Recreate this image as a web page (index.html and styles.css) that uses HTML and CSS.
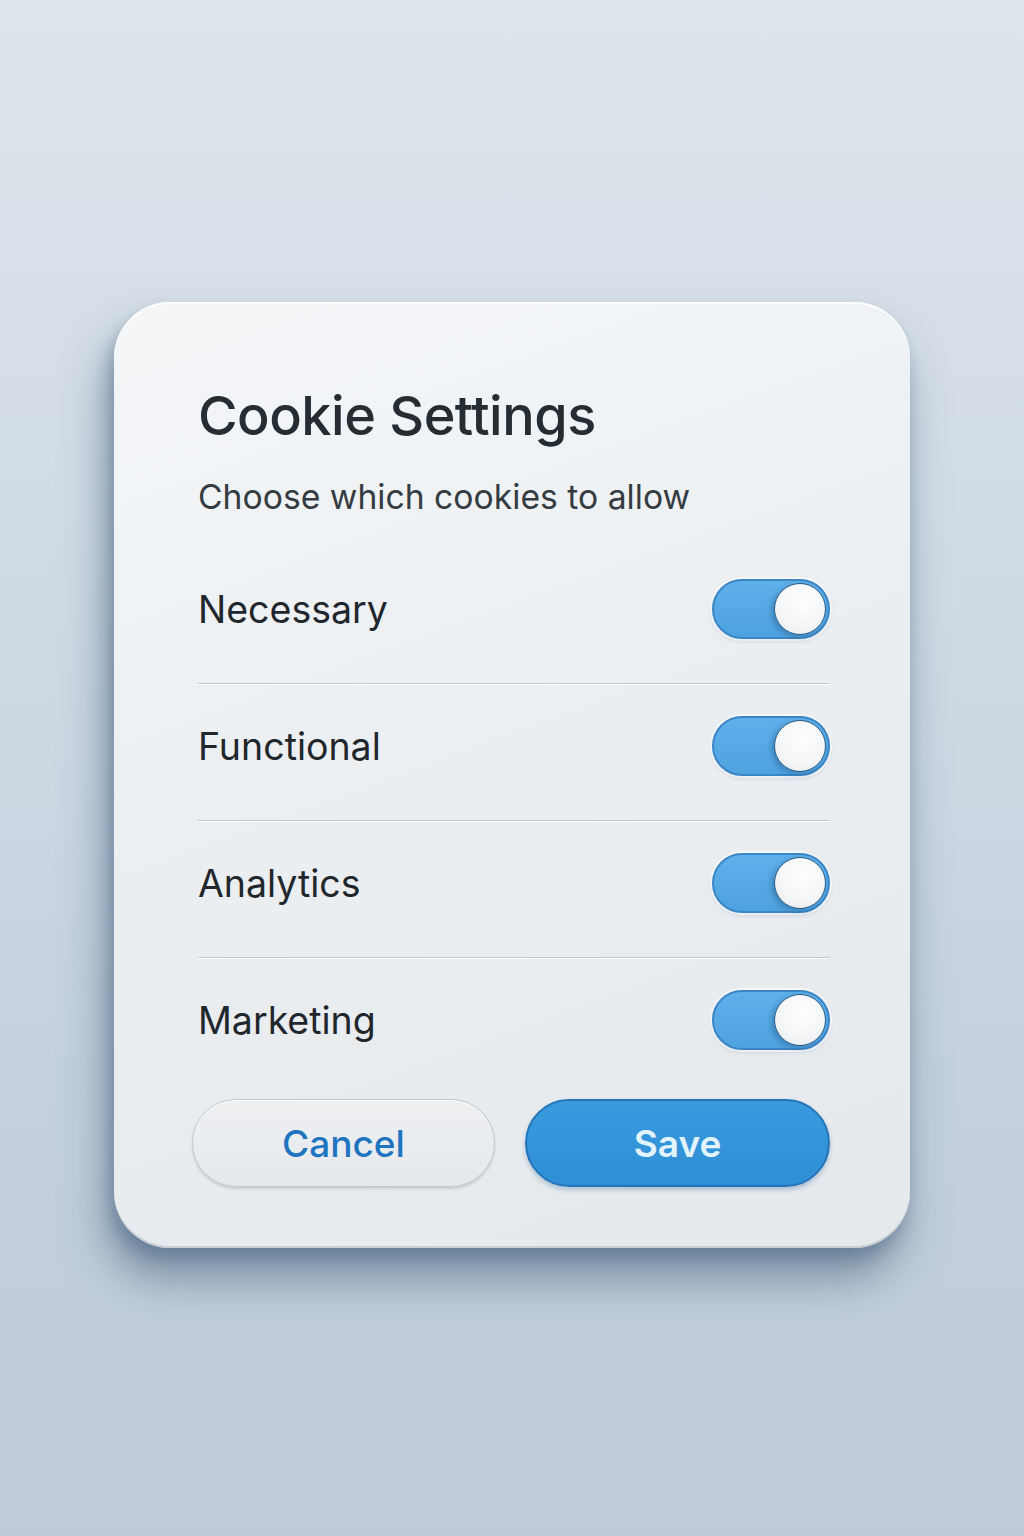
FILE: index.html
```html
<!DOCTYPE html>
<html lang="en">
<head>
<meta charset="utf-8">
<title>Cookie Settings</title>
<link rel="stylesheet" href="styles.css">
</head>
<body>
<main class="stage">
  <section class="dialog" aria-labelledby="dlg-title">
    <h1 id="dlg-title" class="dialog-title">Cookie Settings</h1>
    <p class="dialog-sub">Choose which cookies to allow</p>
    <ul class="prefs">
      <li class="pref">
        <span class="pref-label">Necessary</span>
        <span class="toggle is-on" role="switch" aria-checked="true"><span class="knob"></span></span>
      </li>
      <li class="pref">
        <span class="pref-label">Functional</span>
        <span class="toggle is-on" role="switch" aria-checked="true"><span class="knob"></span></span>
      </li>
      <li class="pref">
        <span class="pref-label">Analytics</span>
        <span class="toggle is-on" role="switch" aria-checked="true"><span class="knob"></span></span>
      </li>
      <li class="pref">
        <span class="pref-label">Marketing</span>
        <span class="toggle is-on" role="switch" aria-checked="true"><span class="knob"></span></span>
      </li>
    </ul>
    <div class="actions">
      <button class="btn btn-ghost" type="button">Cancel</button>
      <button class="btn btn-primary" type="button">Save</button>
    </div>
  </section>
</main>
</body>
</html>
```
FILE: styles.css
```css
* { box-sizing: border-box; }

html, body {
  margin: 0;
  height: 100%;
}

body {
  font-family: Inter, "Noto Sans", "Liberation Sans", sans-serif;
  background: linear-gradient(180deg, #dde4ec 0%, #d3dde6 30%, #c4d1dd 70%, #bfcbd7 100%);
  min-height: 1536px;
}

.stage {
  padding: 302px 0 0 114px;
}

.dialog {
  width: 796px;
  height: 946px;
  border-radius: 56px;
  background: linear-gradient(160deg, #f4f6f8 0%, #eceff2 45%, #e6e9ec 100%);
  box-shadow:
    inset 0 2px 0 rgba(255, 255, 255, 0.9),
    inset 0 -2px 0 rgba(170, 180, 190, 0.5),
    -8px 30px 44px rgba(60, 90, 120, 0.55),
    -4px 10px 14px rgba(60, 90, 120, 0.3);
  padding: 80px 80px 0 84px;
}

.dialog-title {
  margin: 0;
  font-size: 54px;
  font-weight: 500;
  line-height: 68px;
  letter-spacing: -0.5px;
  color: #252d33;
}

.dialog-sub {
  margin: 24px 0 0;
  font-size: 33.7px;
  line-height: 46px;
  font-weight: 400;
  color: #343c42;
}

.prefs {
  list-style: none;
  margin: 27px 0 0;
  padding: 0;
}

.pref {
  display: flex;
  align-items: center;
  justify-content: space-between;
  padding: 32px 0 44px;
  border-bottom: 1.5px solid #c3c8cd;
  box-shadow: 0 1px 0 #ffffff;
}

.pref:last-child {
  border-bottom: none;
  box-shadow: none;
  padding-bottom: 0;
}

.pref-label {
  font-size: 37.5px;
  font-weight: 400;
  color: #1f272d;
}

.toggle {
  position: relative;
  width: 118px;
  height: 60px;
  border-radius: 30px;
  background: linear-gradient(180deg, #5eb0ea 0%, #4ea2e0 100%);
  border: 2px solid #3b86c6;
  box-shadow: 0 0 0 2px rgba(255, 255, 255, 0.6), 0 2px 4px rgba(40, 90, 140, 0.2);
}

.toggle .knob {
  position: absolute;
  top: 2px;
  right: 2px;
  width: 52px;
  height: 52px;
  border-radius: 50%;
  background: radial-gradient(circle at 55% 35%, #ffffff 0%, #f3f5f7 60%, #e6e9ec 100%);
  border: 1.5px solid #2b5d86;
  box-shadow: -3px 2px 5px rgba(20, 60, 100, 0.3);
}

.actions {
  display: flex;
  gap: 30px;
  margin-top: 49px;
  margin-left: -6px;
}

.btn {
  flex: 1;
  height: 88px;
  border-radius: 44px;
  font-family: inherit;
  font-size: 37px;
  cursor: pointer;
}

.btn-ghost {
  background: linear-gradient(180deg, #eef0f2 0%, #e6e9ec 100%);
  border: 1.5px solid #c2c6ca;
  color: #1f74c0;
  font-weight: 500;
  box-shadow: 0 2px 3px rgba(120, 130, 140, 0.3), inset 0 1px 0 #ffffff;
}

.btn-primary {
  background: linear-gradient(180deg, #3a9ade 0%, #2f8fd5 100%);
  border: 2px solid #2474b8;
  color: #e2f4ff;
  font-weight: 600;
  box-shadow: 0 3px 5px rgba(30, 90, 150, 0.3);
}
```
